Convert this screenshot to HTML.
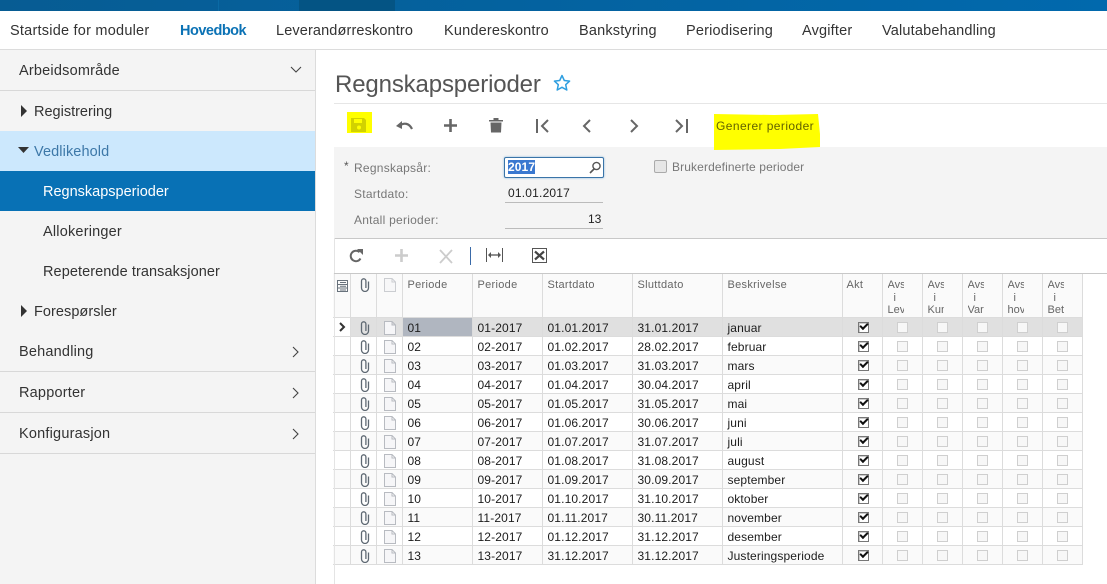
<!DOCTYPE html>
<html><head><meta charset="utf-8"><style>
html,body{margin:0;padding:0;background:#fff}
body{width:1107px;height:584px;position:relative;overflow:hidden;font-family:"Liberation Sans",sans-serif}
.a{position:absolute;white-space:nowrap}
.n{top:22px;font-size:14.5px;line-height:18px;color:#333;letter-spacing:.18px}
.s{font-size:14.5px;line-height:18px;color:#333;letter-spacing:.2px}
.t{letter-spacing:0}
.hl{height:1px;background:#d8d8d8;left:0;width:315px}
.l{font-size:12px;color:#777;line-height:14px;letter-spacing:.25px}
svg{position:absolute;overflow:visible}
table{position:absolute;left:333px;top:273px;border-collapse:collapse;table-layout:fixed;width:749px;font-size:12px;color:#1c1c1c;letter-spacing:.13px}
td,th{border:1px solid #dcdcdc;padding:3px 0 0 5px;height:15px;line-height:14px;overflow:hidden;white-space:nowrap;position:relative;text-align:left;font-weight:normal;vertical-align:top}
th{height:44px;background:#fafafa;color:#666;font-size:11px;padding-top:6px;line-height:13px;box-sizing:border-box;border-top:0;letter-spacing:.3px}
th.c{padding:6px 0 0 5px;letter-spacing:0;line-height:12.500px}
th.c div{width:16px;overflow:hidden}
th.c u{display:block;text-decoration:none;padding-left:6px}
tr:nth-child(even) td{background:#fafafa}
tr.f td{background:#e0e0e0}
tr.f td.x{background:#fff}
tr.f td.q{background:#b0b6c0}
td.x,th:first-child{border-left:0}
td.i,td.k{padding:0;height:18px}
td.i svg{left:8px;top:3px}
td.i svg.d{left:7px;top:3px}
b.o,b.v{position:absolute;left:15px;top:4px;width:9px;height:9px;display:block;box-sizing:content-box}
b.o{left:14px;border:1px solid #cfcfcf;background:#f7f7f7}
b.v{border:1px solid #777;background:#fff;box-shadow:inset 1px 1px 0 #ccc}
b.v:after{content:"";position:absolute;left:1px;top:0;width:6px;height:3px;border-left:2px solid #111;border-bottom:2px solid #111;transform:rotate(-45deg)}
</style></head><body>
<svg width="0" height="0" style="position:absolute"><defs>
<symbol id="clip" viewBox="0 0 12 14"><path d="M9.500 3.500V10a3.500 3.500 0 0 1-7 0V3a2.200 2.200 0 0 1 4.400 0v7" fill="none" stroke="#5f6973" stroke-width="1.300"/></symbol>
<symbol id="doc" viewBox="0 0 12 14"><path d="M.5.500H8L11.500 4v9.500H.5zM8 .5V4h3.500" fill="#f6f6f8" stroke="#b8bbc1"/></symbol>
</defs></svg>

<div class="a" style="left:0;top:0;width:1107px;height:11px;background:linear-gradient(90deg,#075c93,#0169ad)"></div>
<div class="a" style="left:299px;top:0;width:96px;height:11px;background:#045484"></div>
<div class="a" style="left:218px;top:0;width:1px;height:11px;background:#0a6aa5"></div>

<div class="a" style="left:0;top:49px;width:1107px;height:1px;background:#dcdcdc"></div>
<span class="a n" style="left:10px;letter-spacing:.23px">Startside for moduler</span>
<span class="a n" style="left:180px;color:#0b72b5;font-weight:bold;letter-spacing:-.5px">Hovedbok</span>
<span class="a n" style="left:276px;letter-spacing:.13px">Leverandørreskontro</span>
<span class="a n" style="left:444px">Kundereskontro</span>
<span class="a n" style="left:579px">Bankstyring</span>
<span class="a n" style="left:686px">Periodisering</span>
<span class="a n" style="left:802px">Avgifter</span>
<span class="a n" style="left:882px">Valutabehandling</span>

<div class="a" style="left:0;top:50px;width:315px;height:534px;background:#f4f4f4;border-right:1px solid #dcdcdc"></div>
<div class="a hl" style="top:90px"></div>
<div class="a" style="left:0;top:131px;width:315px;height:40px;background:#cce8fd"></div>
<div class="a" style="left:0;top:171px;width:315px;height:40px;background:#0871b5"></div>
<div class="a hl" style="top:371px"></div>
<div class="a hl" style="top:412px"></div>
<div class="a hl" style="top:453px"></div>

<span class="a s" style="left:19px;top:62px">Arbeidsområde</span>
<svg style="left:290px;top:66px" width="12" height="8"><path d="M1 1l5 5 5-5" fill="none" stroke="#444" stroke-width="1.1"/></svg>
<svg style="left:21px;top:105px" width="7" height="12"><path d="M0 0l6 6-6 6z" fill="#333"/></svg>
<span class="a s t" style="left:34px;top:103px">Registrering</span>
<svg style="left:18px;top:147px" width="12" height="7"><path d="M0 0h11l-5.500 6z" fill="#333"/></svg>
<span class="a s" style="left:34px;top:143px;color:#3d78a8;letter-spacing:.1px">Vedlikehold</span>
<span class="a s t" style="left:43px;top:183px;color:#fff">Regnskapsperioder</span>
<span class="a s" style="left:43px;top:223px">Allokeringer</span>
<span class="a s t" style="left:43px;top:263px;letter-spacing:.08px">Repeterende transaksjoner</span>
<svg style="left:21px;top:305px" width="7" height="12"><path d="M0 0l6 6-6 6z" fill="#333"/></svg>
<span class="a s t" style="left:34px;top:303px;letter-spacing:.05px">Forespørsler</span>
<span class="a s" style="left:19px;top:343px">Behandling</span>
<svg style="left:292px;top:346px" width="8" height="12"><path d="M1 1l5 5-5 5" fill="none" stroke="#444" stroke-width="1.1"/></svg>
<span class="a s" style="left:19px;top:384px">Rapporter</span>
<svg style="left:292px;top:387px" width="8" height="12"><path d="M1 1l5 5-5 5" fill="none" stroke="#444" stroke-width="1.1"/></svg>
<span class="a s" style="left:19px;top:425px">Konfigurasjon</span>
<svg style="left:292px;top:428px" width="8" height="12"><path d="M1 1l5 5-5 5" fill="none" stroke="#444" stroke-width="1.1"/></svg>

<span class="a" style="left:335px;top:71px;font-size:24px;line-height:28px;color:#555;letter-spacing:-.14px">Regnskapsperioder</span>
<svg style="left:553px;top:74px" width="18" height="18" viewBox="0 0 18 18"><path d="M9 1.500l2.300 5 5.300.6-3.900 3.600 1.100 5.300L9 13.300 4.200 16l1.100-5.300L1.400 7.100l5.300-.6z" fill="none" stroke="#2f9fe0" stroke-width="1.500" stroke-linejoin="round"/></svg>
<div class="a" style="left:334px;top:103px;width:773px;height:1px;background:#e6e6e6"></div>

<div class="a" style="left:347px;top:112px;width:25px;height:21px;background:#ff0"></div>
<svg style="left:351px;top:118px" width="15" height="14" viewBox="0 0 15 14"><path d="M0 0h13l2 2v12H0z" fill="#d2d200"/><path d="M3 1h8v4H3z" fill="#ff0"/><circle cx="8" cy="9.500" r="2" fill="#ff0"/></svg>
<svg style="left:396px;top:120px" width="17" height="11" viewBox="0 0 17 11"><path d="M4 5.500C8 2.500 13 3 16 9" fill="none" stroke="#666" stroke-width="2.200"/><path d="M0 6l6-5v8z" fill="#666"/></svg>
<svg style="left:444px;top:119px" width="13" height="13"><path d="M0 6.500h13M6.500 0v13" stroke="#666" stroke-width="2.600"/></svg>
<svg style="left:489px;top:117px" width="14" height="16" viewBox="0 0 14 16"><path d="M0 3h14v1.500H0zM4.500 1h5v2h-5zM1.500 5.500h11L12 15.500H2z" fill="#666"/></svg>
<svg style="left:536px;top:119px" width="14" height="14"><path d="M1 0v14" stroke="#666" stroke-width="2"/><path d="M12 1L6 7l6 6" fill="none" stroke="#666" stroke-width="2"/></svg>
<svg style="left:582px;top:119px" width="10" height="14"><path d="M8 1L2 7l6 6" fill="none" stroke="#666" stroke-width="2"/></svg>
<svg style="left:629px;top:119px" width="10" height="14"><path d="M2 1l6 6-6 6" fill="none" stroke="#666" stroke-width="2"/></svg>
<svg style="left:674px;top:119px" width="14" height="14"><path d="M2 1l6 6-6 6" fill="none" stroke="#666" stroke-width="2"/><path d="M13 0v14" stroke="#666" stroke-width="2"/></svg>

<div class="a" style="left:334px;top:147px;width:773px;height:91px;background:#f4f4f4;border-bottom:1px solid #c8c8c8"></div>
<svg style="left:712px;top:113px" width="108" height="37"><path d="M2 1l60 1 44-1 2 20 0 13-40 2-66 1z" fill="#ff0"/></svg>
<span class="a" style="left:716px;top:119px;font-size:12px;line-height:14px;color:#626200;letter-spacing:.42px">Generer perioder</span>

<span class="a" style="left:344px;top:159px;font-size:12px;line-height:14px;color:#555">*</span>
<span class="a l" style="left:354px;top:161px">Regnskapsår:</span>
<span class="a l" style="left:354px;top:187px">Startdato:</span>
<span class="a l" style="left:354px;top:213px">Antall perioder:</span>
<div class="a" style="left:504px;top:157px;width:98px;height:19px;border:1px solid #3a74a8;border-radius:2px;background:#fff;box-shadow:0 0 2px #8ab8dc"></div>
<span class="a" style="left:508px;top:160px;height:14px;background:#3a78d0;color:#fff;font-size:12px;line-height:14px;font-weight:bold;letter-spacing:.1px">2017</span>
<svg style="left:589px;top:161px" width="13" height="13"><circle cx="7.500" cy="5" r="3.600" fill="none" stroke="#555" stroke-width="1.400"/><path d="M5 8l-4 4" stroke="#555" stroke-width="1.600"/></svg>
<span class="a" style="left:508px;top:186px;font-size:12px;line-height:14px;color:#222;letter-spacing:.2px">01.01.2017</span>
<div class="a" style="left:505px;top:202px;width:98px;height:1px;background:#bbb"></div>
<span class="a" style="left:588px;top:212px;font-size:12px;line-height:14px;color:#222">13</span>
<div class="a" style="left:505px;top:228px;width:98px;height:1px;background:#bbb"></div>
<div class="a" style="left:654px;top:160px;width:11px;height:11px;border:1px solid #aaa;border-radius:2px;background:#e6e6e6"></div>
<span class="a l" style="left:672px;top:160px;letter-spacing:.12px">Brukerdefinerte perioder</span>

<svg style="left:349px;top:249px" width="14" height="14" viewBox="0 0 14 14"><path d="M11.500 9.500A5.200 5.200 0 1 1 10.500 3.200" fill="none" stroke="#666" stroke-width="2"/><path d="M8 0h6v6z" fill="#666"/></svg>
<svg style="left:395px;top:249px" width="13" height="13"><path d="M0 6.500h13M6.500 0v13" stroke="#ccc" stroke-width="2.600"/></svg>
<svg style="left:439px;top:250px" width="14" height="13"><path d="M1 0l12 13M13 0L1 13" stroke="#ccc" stroke-width="1.800"/></svg>
<div class="a" style="left:470px;top:247px;width:1px;height:18px;background:#3a6aa8"></div>
<svg style="left:486px;top:248px" width="17" height="14"><path d="M.5 0v14M16.500 0v14" stroke="#555"/><path d="M3 7h11" stroke="#555" stroke-width="1.300"/><path d="M2 7l3-3v6zM15 7l-3-3v6z" fill="#555"/></svg>
<svg style="left:532px;top:248px" width="15" height="15"><rect x=".5" y=".5" width="14" height="14" fill="#fff" stroke="#555"/><path d="M3 3.500l9 8M12 3.500l-9 8" stroke="#444" stroke-width="2.200"/></svg>

<table>
<colgroup><col style="width:17px"><col style="width:26px"><col style="width:26px"><col style="width:70px"><col style="width:70px"><col style="width:90px"><col style="width:90px"><col style="width:120px"><col style="width:40px"><col style="width:40px"><col style="width:40px"><col style="width:40px"><col style="width:40px"><col style="width:40px"></colgroup>
<tr><th style="padding:0"><svg style="left:4px;top:7px" width="11" height="12"><path d="M.5.500h10v11H.5zM.5 4.500h10M.5 8h10M3 2.500h6M3 6.300h6M3 10h6" fill="none" stroke="#68727c"/></svg></th><th style="padding:0"><svg style="left:8px;top:5px" width="12" height="14"><use href="#clip"/></svg></th><th style="padding:0"><svg style="left:7px;top:5px" width="12" height="14" opacity=".7"><use href="#doc"/></svg></th><th>Periode</th><th>Periode</th><th>Startdato</th><th>Sluttdato</th><th>Beskrivelse</th><th style="padding-left:4px">Akt</th><th class="c"><div>Avs<u>i</u>Lev</div></th><th class="c"><div>Avs<u>i</u>Kun</div></th><th class="c"><div>Avs<u>i</u>Var</div></th><th class="c"><div>Avs<u>i</u>hov</div></th><th class="c"><div>Avs<u>i</u>Bet</div></th></tr>
<tr class="f"><td class="x i"><svg style="left:6px;top:4px" width="7" height="10"><path d="M1 1l4 4-4 4" fill="none" stroke="#333" stroke-width="2"/></svg></td><td class="i"><svg width="12" height="14"><use href="#clip"/></svg></td><td class="i"><svg class="d" width="12" height="14"><use href="#doc"/></svg></td><td class="q">01</td><td>01-2017</td><td>01.01.2017</td><td>31.01.2017</td><td>januar</td><td class="k"><b class="v"></b></td><td class="k"><b class="o"></b></td><td class="k"><b class="o"></b></td><td class="k"><b class="o"></b></td><td class="k"><b class="o"></b></td><td class="k"><b class="o"></b></td></tr>
<tr><td class="x i"></td><td class="i"><svg width="12" height="14"><use href="#clip"/></svg></td><td class="i"><svg class="d" width="12" height="14"><use href="#doc"/></svg></td><td>02</td><td>02-2017</td><td>01.02.2017</td><td>28.02.2017</td><td>februar</td><td class="k"><b class="v"></b></td><td class="k"><b class="o"></b></td><td class="k"><b class="o"></b></td><td class="k"><b class="o"></b></td><td class="k"><b class="o"></b></td><td class="k"><b class="o"></b></td></tr>
<tr><td class="x i"></td><td class="i"><svg width="12" height="14"><use href="#clip"/></svg></td><td class="i"><svg class="d" width="12" height="14"><use href="#doc"/></svg></td><td>03</td><td>03-2017</td><td>01.03.2017</td><td>31.03.2017</td><td>mars</td><td class="k"><b class="v"></b></td><td class="k"><b class="o"></b></td><td class="k"><b class="o"></b></td><td class="k"><b class="o"></b></td><td class="k"><b class="o"></b></td><td class="k"><b class="o"></b></td></tr>
<tr><td class="x i"></td><td class="i"><svg width="12" height="14"><use href="#clip"/></svg></td><td class="i"><svg class="d" width="12" height="14"><use href="#doc"/></svg></td><td>04</td><td>04-2017</td><td>01.04.2017</td><td>30.04.2017</td><td>april</td><td class="k"><b class="v"></b></td><td class="k"><b class="o"></b></td><td class="k"><b class="o"></b></td><td class="k"><b class="o"></b></td><td class="k"><b class="o"></b></td><td class="k"><b class="o"></b></td></tr>
<tr><td class="x i"></td><td class="i"><svg width="12" height="14"><use href="#clip"/></svg></td><td class="i"><svg class="d" width="12" height="14"><use href="#doc"/></svg></td><td>05</td><td>05-2017</td><td>01.05.2017</td><td>31.05.2017</td><td>mai</td><td class="k"><b class="v"></b></td><td class="k"><b class="o"></b></td><td class="k"><b class="o"></b></td><td class="k"><b class="o"></b></td><td class="k"><b class="o"></b></td><td class="k"><b class="o"></b></td></tr>
<tr><td class="x i"></td><td class="i"><svg width="12" height="14"><use href="#clip"/></svg></td><td class="i"><svg class="d" width="12" height="14"><use href="#doc"/></svg></td><td>06</td><td>06-2017</td><td>01.06.2017</td><td>30.06.2017</td><td>juni</td><td class="k"><b class="v"></b></td><td class="k"><b class="o"></b></td><td class="k"><b class="o"></b></td><td class="k"><b class="o"></b></td><td class="k"><b class="o"></b></td><td class="k"><b class="o"></b></td></tr>
<tr><td class="x i"></td><td class="i"><svg width="12" height="14"><use href="#clip"/></svg></td><td class="i"><svg class="d" width="12" height="14"><use href="#doc"/></svg></td><td>07</td><td>07-2017</td><td>01.07.2017</td><td>31.07.2017</td><td>juli</td><td class="k"><b class="v"></b></td><td class="k"><b class="o"></b></td><td class="k"><b class="o"></b></td><td class="k"><b class="o"></b></td><td class="k"><b class="o"></b></td><td class="k"><b class="o"></b></td></tr>
<tr><td class="x i"></td><td class="i"><svg width="12" height="14"><use href="#clip"/></svg></td><td class="i"><svg class="d" width="12" height="14"><use href="#doc"/></svg></td><td>08</td><td>08-2017</td><td>01.08.2017</td><td>31.08.2017</td><td>august</td><td class="k"><b class="v"></b></td><td class="k"><b class="o"></b></td><td class="k"><b class="o"></b></td><td class="k"><b class="o"></b></td><td class="k"><b class="o"></b></td><td class="k"><b class="o"></b></td></tr>
<tr><td class="x i"></td><td class="i"><svg width="12" height="14"><use href="#clip"/></svg></td><td class="i"><svg class="d" width="12" height="14"><use href="#doc"/></svg></td><td>09</td><td>09-2017</td><td>01.09.2017</td><td>30.09.2017</td><td>september</td><td class="k"><b class="v"></b></td><td class="k"><b class="o"></b></td><td class="k"><b class="o"></b></td><td class="k"><b class="o"></b></td><td class="k"><b class="o"></b></td><td class="k"><b class="o"></b></td></tr>
<tr><td class="x i"></td><td class="i"><svg width="12" height="14"><use href="#clip"/></svg></td><td class="i"><svg class="d" width="12" height="14"><use href="#doc"/></svg></td><td>10</td><td>10-2017</td><td>01.10.2017</td><td>31.10.2017</td><td>oktober</td><td class="k"><b class="v"></b></td><td class="k"><b class="o"></b></td><td class="k"><b class="o"></b></td><td class="k"><b class="o"></b></td><td class="k"><b class="o"></b></td><td class="k"><b class="o"></b></td></tr>
<tr><td class="x i"></td><td class="i"><svg width="12" height="14"><use href="#clip"/></svg></td><td class="i"><svg class="d" width="12" height="14"><use href="#doc"/></svg></td><td>11</td><td>11-2017</td><td>01.11.2017</td><td>30.11.2017</td><td>november</td><td class="k"><b class="v"></b></td><td class="k"><b class="o"></b></td><td class="k"><b class="o"></b></td><td class="k"><b class="o"></b></td><td class="k"><b class="o"></b></td><td class="k"><b class="o"></b></td></tr>
<tr><td class="x i"></td><td class="i"><svg width="12" height="14"><use href="#clip"/></svg></td><td class="i"><svg class="d" width="12" height="14"><use href="#doc"/></svg></td><td>12</td><td>12-2017</td><td>01.12.2017</td><td>31.12.2017</td><td>desember</td><td class="k"><b class="v"></b></td><td class="k"><b class="o"></b></td><td class="k"><b class="o"></b></td><td class="k"><b class="o"></b></td><td class="k"><b class="o"></b></td><td class="k"><b class="o"></b></td></tr>
<tr><td class="x i"></td><td class="i"><svg width="12" height="14"><use href="#clip"/></svg></td><td class="i"><svg class="d" width="12" height="14"><use href="#doc"/></svg></td><td>13</td><td>13-2017</td><td>31.12.2017</td><td>31.12.2017</td><td>Justeringsperiode</td><td class="k"><b class="v"></b></td><td class="k"><b class="o"></b></td><td class="k"><b class="o"></b></td><td class="k"><b class="o"></b></td><td class="k"><b class="o"></b></td><td class="k"><b class="o"></b></td></tr>
</table>
<div class="a" style="left:334px;top:238px;width:1px;height:346px;background:#e4e4e4"></div>
<div class="a" style="left:334px;top:273px;width:773px;height:1px;background:#c8c8c8"></div>
</body></html>
